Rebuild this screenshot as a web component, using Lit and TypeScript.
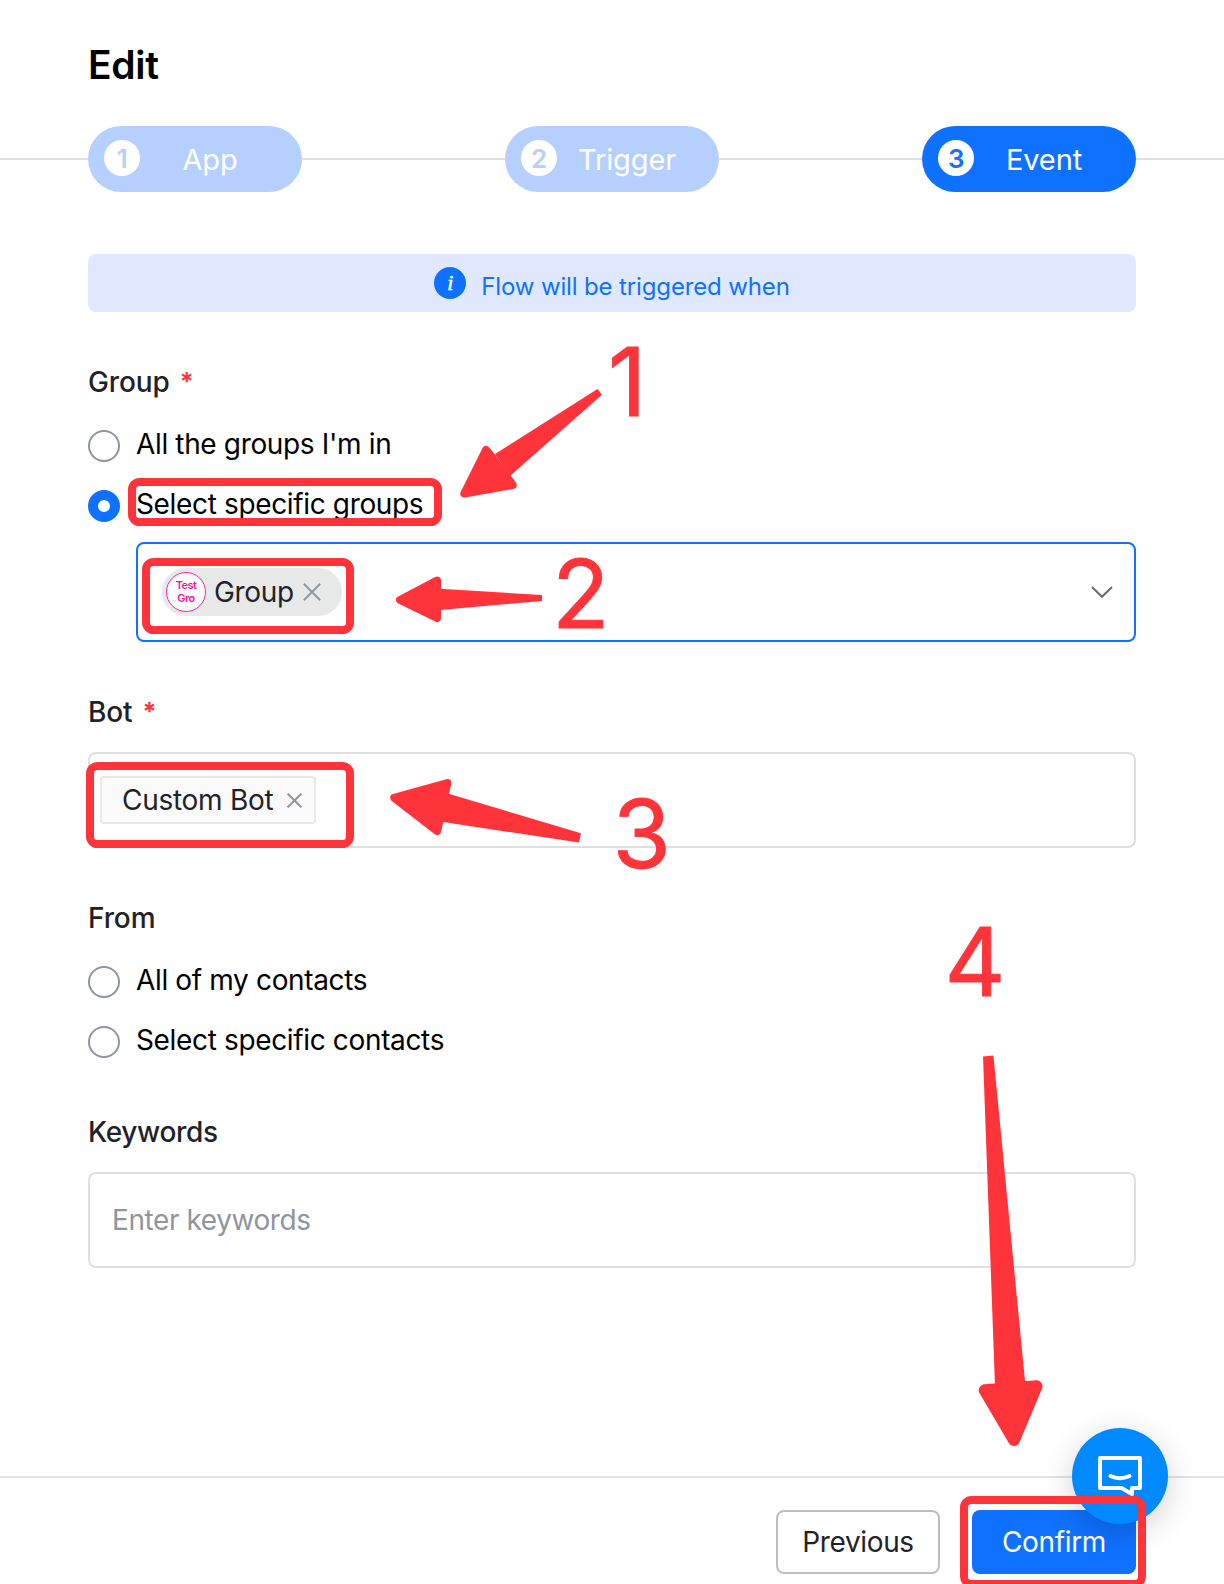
import { LitElement, html, svg, css, nothing } from "lit";
import { customElement, property } from "lit/decorators.js";

@customElement("flow-steps")
class FlowSteps extends LitElement {
  static styles = css`
    :host { display: flex; align-items: center; height: 66px; }
    .line { flex: 1; height: 2px; background: #dee0e3; }
    .edge { flex: 0 0 88px; }
    .pill {
      box-sizing: border-box; display: flex; align-items: center;
      width: 214px; height: 66px; padding: 0 22px 2px 16px;
      border-radius: 33px; background: #b5cfff; color: #fff;
      --tone: #b5cfff;
    }
    .active { background: #0f71ff; --tone: #0f71ff; }
    .num {
      width: 36px; height: 36px; border-radius: 50%; background: #fff;
      color: var(--tone); font-weight: 600; font-size: 26px; line-height: 37px; text-align: center;
    }
    .name { flex: 1; text-align: center; font-size: 29px; line-height: 36px; letter-spacing: -0.1px; padding-top: 4px; }
  `;
  private steps = ["App", "Trigger", "Event"];
  render() {
    return html`
      <div class="line edge"></div>
      ${this.steps.map((s, i) => html`
        ${i ? html`<div class="line"></div>` : nothing}
        <div class="pill ${i === 2 ? "active" : ""}">
          <span class="num">${i + 1}</span><span class="name">${s}</span>
        </div>`)}
      <div class="line edge"></div>`;
  }
}

@customElement("radio-row")
class RadioRow extends LitElement {
  static styles = css`
    :host { display: flex; align-items: center; gap: 16px; height: 60px; }
    .dot {
      box-sizing: border-box; width: 32px; height: 32px; margin-top: 4px;
      border: 2px solid #8f959e; border-radius: 50%; background: #fff;
    }
    .on { border: 10px solid #0f71ff; }
    .text { color: #000; line-height: 40px; }
  `;
  @property() label = "";
  @property({ type: Boolean }) checked = false;
  render() {
    return html`<span class="dot ${this.checked ? "on" : ""}"></span><span class="text">${this.label}</span>`;
  }
}

const frames = [
  [128, 478, 314, 48],
  [142, 558, 212, 76],
  [86, 762, 268, 86],
  [960, 1496, 186, 92],
];

@customElement("red-marks")
class RedMarks extends LitElement {
  static styles = css`
    :host { position: absolute; inset: 0; pointer-events: none; }
    svg { display: block; }
    .frame { fill: none; stroke: #ff343b; stroke-width: 8; }
    .fill { fill: #ff343b; }
    .head { fill: #ff343b; stroke: #ff343b; stroke-width: 8; stroke-linejoin: round; }
    .big { stroke-width: 12; }
    .digit { fill: #ff343b; stroke: #ff343b; stroke-width: 0.9px; font: 400 94.5px Inter, sans-serif; letter-spacing: 0; }
  `;
  render() {
    return html`<svg width="1224" height="1584" viewBox="0 0 1224 1584">
      ${frames.map(([x, y, w, h]) => svg`<rect class="frame" x=${x + 4} y=${y + 4} width=${w - 8} height=${h - 8} rx="7.5"/>`)}
      <path class="fill" d="M597.5 389L602 394.8L510 476L495 454Z"/>
      <path class="head" d="M486 450L464.3 493.6L512.7 485Z"/>
      <path class="fill" d="M486 446L489.5 448L495 454.5L510 475L515.5 482L490 486Z"/>
      <path class="fill" d="M542 595V601L440 610V588.7Z"/>
      <path class="head" d="M437 580.5L400 600L437 618Z"/>
      <path class="fill" d="M581 833.3L579 842.6L440 821.6L447 793.2Z"/>
      <path class="head" d="M447.3 783L394.2 797.8L437.2 831Z"/>
      <path class="fill" d="M983 1056.5L993.4 1055.5L1025.3 1384L995 1386Z"/>
      <path class="head big" d="M984.7 1390.3L1036.5 1386.3L1014 1440Z"/>
      <text class="digit" x="608" y="415.8">1</text>
      <text class="digit" x="552" y="627.8">2</text>
      <text class="digit" x="612.5" y="867.8">3</text>
      <text class="digit" x="944.5" y="995.8">4</text>
    </svg>`;
  }
}

@customElement("app-root")
class AppRoot extends LitElement {
  static styles = css`
    :host {
      display: flex; flex-direction: column; position: relative; box-sizing: border-box;
      width: 1224px; height: 1584px; overflow: hidden; background: #fff; color: #1f2329;
      font-family: Inter, sans-serif; font-size: 28px; letter-spacing: -0.35px; white-space: nowrap;
    }
    svg { display: block; }
    .title { margin: 41px 88px 37px; font-size: 39px; line-height: 48px; font-weight: 600; letter-spacing: -0.3px; color: #000; }
    .form { display: flex; flex-direction: column; padding: 62px 88px 0; flex: 1; }
    .info {
      display: flex; align-items: center; justify-content: center; gap: 15px; height: 58px;
      border-radius: 8px; background: #e0e8ff; color: #0f71ff; font-size: 24px; letter-spacing: -0.14px;
    }
    .badge {
      width: 32px; height: 32px; border-radius: 50%; background: #0f71ff; color: #fff; text-align: center;
      font: italic 400 22px/31px "Liberation Serif", serif; -webkit-text-stroke: 0.5px #fff;
    }
    .infotext { line-height: 24px; padding-top: 7px; }
    .label { margin-top: 50px; line-height: 40px; font-weight: 500; letter-spacing: -0.1px; display: flex; gap: 10px; }
    .star { color: #ff343b; font-size: 25px; font-weight: 700; }
    .select {
      display: flex; align-items: center; justify-content: space-between; box-sizing: border-box;
      height: 100px; margin: 8px 0 0 48px; padding: 0 21px 0 24px;
      border: 2px solid #0f71ff; border-radius: 8px;
    }
    .tag { display: flex; align-items: center; width: 180px; height: 48px; border-radius: 24px; background: #e7e9e8; box-sizing: border-box; padding-left: 4px; }
    .avatar {
      box-sizing: border-box; width: 40px; height: 40px; border: 1px solid #ff1fa5; border-radius: 50%;
      background: #fff; color: #f5129b; text-align: center; padding-top: 6px;
      font-size: 11px; line-height: 13px; font-weight: 600; letter-spacing: -0.55px;
    }
    .tagname { margin-left: 8px; width: 89px; line-height: 40px; }
    .bot {
      display: flex; align-items: center; box-sizing: border-box; height: 96px; margin-top: 20px;
      padding-left: 10px; border: 2px solid #dee0e3; border-radius: 8px;
    }
    .chip {
      display: flex; align-items: center; box-sizing: border-box; width: 216px; height: 48px;
      padding-left: 20px; border: 2px solid #e8e8e8; border-radius: 4px; background: #fafafa;
    }
    .chipname { width: 164.5px; line-height: 40px; letter-spacing: -0.28px; }
    .gap { margin-bottom: 12px; }
    .keys { margin-top: 42px; letter-spacing: -0.35px; }
    .input {
      box-sizing: border-box; height: 96px; margin-top: 20px; padding-left: 22px; letter-spacing: -0.42px;
      border: 2px solid #dee0e3; border-radius: 8px; color: #8f959e; line-height: 92px;
    }
    .footer {
      display: flex; justify-content: flex-end; gap: 32px; box-sizing: border-box; height: 108px;
      padding: 32px 88px 0; border-top: 2px solid #e4e4e5;
    }
    .btn { box-sizing: border-box; width: 164px; height: 64px; border-radius: 8px; text-align: center; }
    .plain { border: 2px solid #bbbfc4; line-height: 61px; }
    .primary { background: #0f71ff; color: #fff; line-height: 65px; }
    .chat {
      position: absolute; left: 1072px; top: 1428px; width: 96px; height: 96px; border-radius: 50%;
      background: #008aff; box-shadow: 0 8px 32px rgba(0, 0, 0, 0.18);
    }
  `;
  private cross(size: number) {
    return html`<svg width=${size} height=${size} viewBox="0 0 18 18" fill="none" stroke="#8f959e" stroke-width=${36 / size} stroke-linecap="butt"><path d="M.8.8l16.4 16.4M17.2.8L.8 17.2"/></svg>`;
  }
  render() {
    return html`
      <h1 class="title">Edit</h1>
      <flow-steps></flow-steps>
      <div class="form">
        <div class="info"><span class="badge">i</span><span class="infotext">Flow will be triggered when</span></div>
        <div class="label gap">Group <span class="star">*</span></div>
        <radio-row label="All the groups I'm in"></radio-row>
        <radio-row label="Select specific groups" checked></radio-row>
        <div class="select">
          <div class="tag"><div class="avatar">Test<br>Gro</div><span class="tagname">Group</span>${this.cross(18)}</div>
          <svg width="22" height="12" viewBox="0 0 22 12" fill="none" stroke="#646a73" stroke-width="2"><path d="M1 1l10 9.8L21 1"/></svg>
        </div>
        <div class="label">Bot <span class="star">*</span></div>
        <div class="bot"><div class="chip"><span class="chipname">Custom Bot</span>${this.cross(15)}</div></div>
        <div class="label gap">From</div>
        <radio-row label="All of my contacts"></radio-row>
        <radio-row label="Select specific contacts"></radio-row>
        <div class="label keys">Keywords</div>
        <div class="input">Enter keywords</div>
      </div>
      <div class="footer"><div class="btn plain">Previous</div><div class="btn primary">Confirm</div></div>
      <div class="chat">
        <svg width="96" height="96" viewBox="0 0 96 96" fill="none" stroke="#fff" stroke-width="4" stroke-linejoin="round">
          <path d="M28 30H68V60H60V66L49.5 60H28Z"/>
          <path d="M38.5 48Q48 52.5 57.5 48" stroke-linecap="round"/>
        </svg>
      </div>
      <red-marks></red-marks>`;
  }
}
